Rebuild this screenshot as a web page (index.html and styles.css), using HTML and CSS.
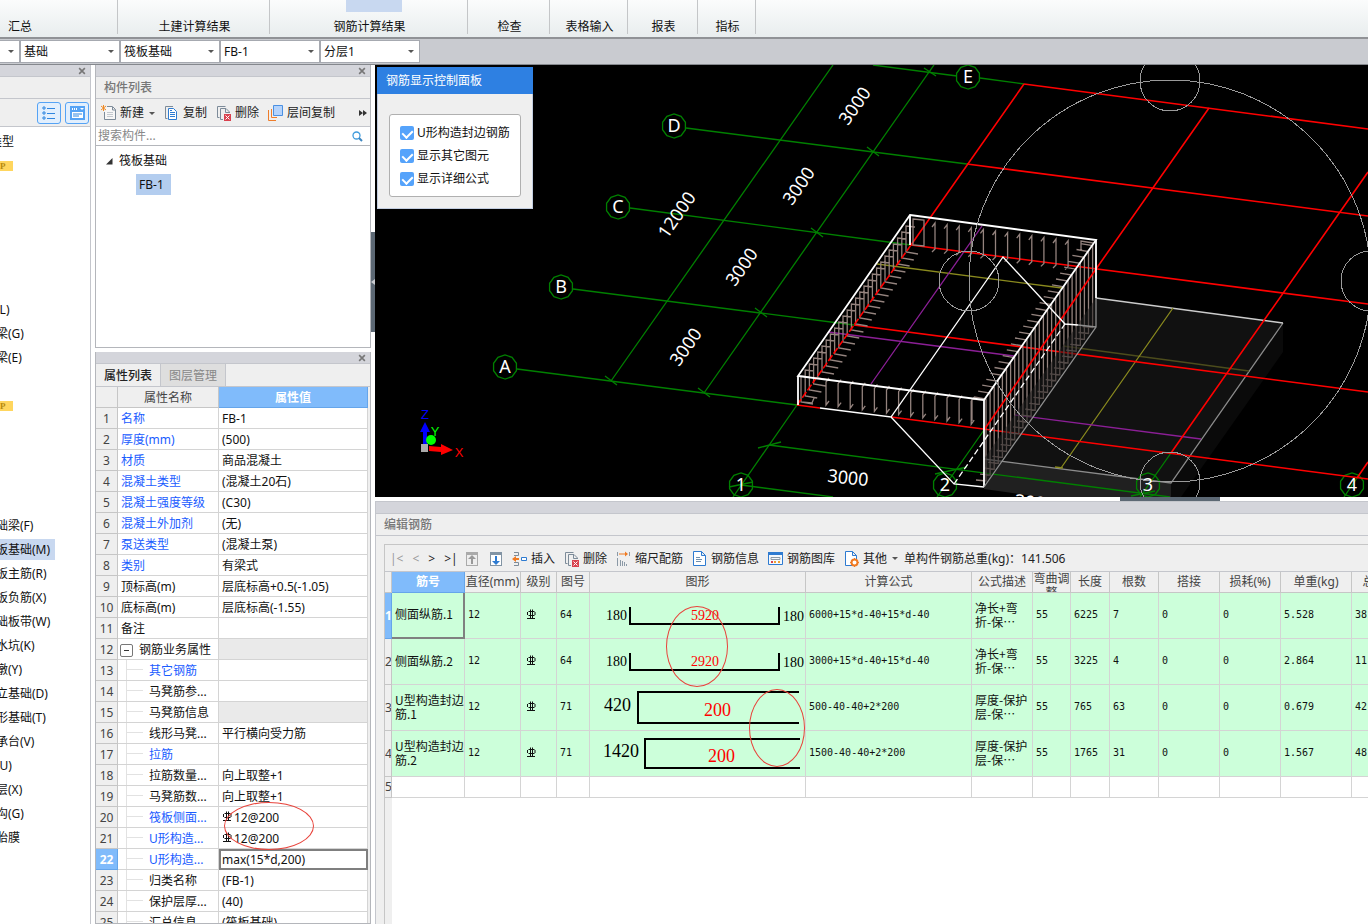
FILE: index.html
```html
<!DOCTYPE html>
<html lang="zh-CN">
<head>
  <meta charset="UTF-8" />
  <meta name="viewport" content="width=device-width, initial-scale=1.0"/>
  <title>筏板基础 - 编辑钢筋</title>
  <link rel="stylesheet" href="styles.css">
</head>
<body>
  <svg class="defs" width="0" height="0">
    <symbol id="grade" viewBox="0 0 10 11"><path d="M4.5 .5v9M6.500 .5v9M2.500 2.500h6M2.500 6.500h6M1.500 3v3M9 3v3M1 9.500h8" fill="none" stroke="currentColor"/></symbol>
    <symbol id="icon-delete" viewBox="0 0 16 16"><path d="M9.5 1.5H1.5v11h2M7 14.5H4.500V3.500H10l3.500 3.500V8M9.500 4v3.500H13" fill="none" stroke="#7d8b99"/><path d="M8 9h7v7H8z" fill="#d9414e"/><path d="M9.500 10.500l4 4M13.500 10.500l-4 4" stroke="#fff"/></symbol>
    <symbol id="icon-close" viewBox="0 0 7 7"><path d="M1 1l5 5M6 1L1 6" stroke="#777" stroke-width="1.400"/></symbol>
  </svg>

  <nav class="ribbon">
    <a class="first" href="#">汇总</a>
    <a class="w-152" href="#">土建计算结果</a>
    <a class="w-198 current" href="#">钢筋计算结果</a>
    <a class="w-82" href="#">检查</a>
    <a class="w-78" href="#">表格输入</a>
    <a class="w-70" href="#">报表</a>
    <a class="w-58" href="#">指标</a>
  </nav>

  <div class="combo-bar">
    <label class="combo combo-cut"><select aria-label="楼层"><option></option></select></label>
    <label class="combo"><select aria-label="构件大类"><option>基础</option></select></label>
    <label class="combo"><select aria-label="构件类型"><option>筏板基础</option></select></label>
    <label class="combo"><select aria-label="构件"><option>FB-1</option></select></label>
    <label class="combo"><select aria-label="分层"><option>分层1</option></select></label>
  </div>

  <div class="main">
    <aside class="nav-panel">
      <div class="strip"><button type="button" aria-label="关闭"><svg><use href="#icon-close"/></svg></button></div>
      <div class="panel-title"></div>
      <div class="view-bar">
        <button type="button" aria-label="列表"><svg width="14" height="14" viewBox="0 0 14 14"><path d="M1 1h2v2H1zM1 6h2v2H1zM1 11h2v2H1zM5 2.500h8M5 7.500h8M5 12.500h8" fill="none" stroke="#2f86e0"/></svg></button>
        <button type="button" aria-label="视图"><svg width="15" height="14" viewBox="0 0 15 14"><path d="M0 0h15v14H0z" fill="#55a3f5"/><path d="M2 6h11v6H2zM2 2h1v2H2zM4 2h1v2H4zM6 2h1v2H6zM10 2h4l-2 2z" fill="#fff"/><path d="M3 8h9M3 10h6" stroke="#2f86e0"/></svg></button>
      </div>
      <ul class="nav-list">
        <li class="group">类型</li>
        <li><span class="tag">P</span></li>
        <li></li><li></li><li></li><li></li><li></li>
        <li>(L)</li>
        <li>梁(G)</li>
        <li>梁(E)</li>
        <li></li>
        <li><span class="tag">P</span></li>
        <li></li><li></li><li></li><li></li>
        <li>础梁(F)</li>
        <li><span class="picked">板基础(M)</span></li>
        <li>板主筋(R)</li>
        <li>板负筋(X)</li>
        <li>础板带(W)</li>
        <li>水坑(K)</li>
        <li>墩(Y)</li>
        <li>立基础(D)</li>
        <li>形基础(T)</li>
        <li>承台(V)</li>
        <li>(U)</li>
        <li>层(X)</li>
        <li>沟(G)</li>
        <li>胎膜</li>
      </ul>
    </aside>

    <div class="side">
      <section class="component-panel">
        <div class="strip"><button type="button" aria-label="关闭"><svg><use href="#icon-close"/></svg></button></div>
        <h2 class="panel-title">构件列表</h2>
        <div class="toolbar">
          <button type="button"><svg viewBox="0 0 16 16"><path d="M6 1.500h5.500l3 3v10h-11V7M11.500 2v3h3" fill="#f7f7f7" stroke="#7d8b99"/><path d="M6 7.500h6M6 9.500h6M6 11.500h6" stroke="#c3c8ce"/><path d="M2.500 0v6M0 1l5 4M5 1L0 5" stroke="#f08a24"/></svg>新建<i class="caret"></i></button>
          <button type="button"><svg viewBox="0 0 16 16"><path d="M9 1.500H1.500v12h2" fill="none" stroke="#7d8b99"/><path d="M4.500 3.500h5l3 3v8h-8zM6 7.500h5M6 9.500h5M6 11.500h5M6 5.500h2" fill="#fff" stroke="#2e7bd1"/></svg>复制</button>
          <button type="button"><svg><use href="#icon-delete"/></svg>删除</button>
          <button type="button"><svg viewBox="0 0 16 16"><path d="M.500 5v10.500H8M3.500 4v8.500H9" fill="none" stroke="#ee7d2b"/><path d="M5.500.500h9v10h-9z" fill="#b5d3fb" stroke="#4a90e2"/></svg>层间复制</button>
          <button type="button" class="more" aria-label="更多"><svg width="8" height="6" viewBox="0 0 8 6"><path d="M0 0l4 3-4 3zM4 0l4 3-4 3z" fill="#333"/></svg></button>
        </div>
        <div class="search">
          <input type="text" placeholder="搜索构件..." aria-label="搜索构件">
          <svg width="11" height="11" viewBox="0 0 11 11"><circle cx="4.500" cy="4.500" r="3.500" fill="none" stroke="#3f9bdc" stroke-width="1.300"/><path d="M7 7l3 3" stroke="#3f87c0" stroke-width="2"/></svg>
        </div>
        <div class="tree">
          <div class="tree-root"><svg width="7" height="7" viewBox="0 0 7 7"><path d="M6.500 0v6.500H0z" fill="#333"/></svg>筏板基础</div>
          <span class="tree-leaf">FB-1</span>
        </div>
      </section>

      <section class="property-panel">
        <div class="strip"><button type="button" aria-label="关闭"><svg><use href="#icon-close"/></svg></button></div>
        <div class="tabs">
          <button type="button" class="active">属性列表</button>
          <button type="button">图层管理</button>
        </div>
        <table class="props">
          <colgroup><col class="c-num"><col class="c-name"><col class="c-val"></colgroup>
          <thead><tr><th></th><th>属性名称</th><th class="hot">属性值</th></tr></thead>
          <tbody>
            <tr><th>1</th><td class="link">名称</td><td>FB-1</td></tr>
            <tr><th>2</th><td class="link">厚度(mm)</td><td>(500)</td></tr>
            <tr><th>3</th><td class="link">材质</td><td>商品混凝土</td></tr>
            <tr><th>4</th><td class="link">混凝土类型</td><td>(混凝土20石)</td></tr>
            <tr><th>5</th><td class="link">混凝土强度等级</td><td>(C30)</td></tr>
            <tr><th>6</th><td class="link">混凝土外加剂</td><td>(无)</td></tr>
            <tr><th>7</th><td class="link">泵送类型</td><td>(混凝土泵)</td></tr>
            <tr><th>8</th><td class="link">类别</td><td>有梁式</td></tr>
            <tr><th>9</th><td>顶标高(m)</td><td>层底标高+0.5(-1.05)</td></tr>
            <tr><th>10</th><td>底标高(m)</td><td>层底标高(-1.55)</td></tr>
            <tr><th>11</th><td>备注</td><td></td></tr>
            <tr><th>12</th><td class="parent"><button type="button" class="fold" aria-label="折叠"></button>钢筋业务属性</td><td class="off"></td></tr>
            <tr><th>13</th><td class="sub link">其它钢筋</td><td></td></tr>
            <tr><th>14</th><td class="sub">马凳筋参...</td><td></td></tr>
            <tr><th>15</th><td class="sub">马凳筋信息</td><td class="off"></td></tr>
            <tr><th>16</th><td class="sub">线形马凳...</td><td>平行横向受力筋</td></tr>
            <tr><th>17</th><td class="sub link">拉筋</td><td></td></tr>
            <tr><th>18</th><td class="sub">拉筋数量...</td><td>向上取整+1</td></tr>
            <tr><th>19</th><td class="sub">马凳筋数...</td><td>向上取整+1</td></tr>
            <tr><th>20</th><td class="sub link">筏板侧面...</td><td><svg class="grade"><use href="#grade"/></svg>12@200</td></tr>
            <tr><th>21</th><td class="sub link">U形构造...</td><td><svg class="grade"><use href="#grade"/></svg>12@200</td></tr>
            <tr><th class="hot">22</th><td class="sub link">U形构造...</td><td class="editing">max(15*d,200)</td></tr>
            <tr><th>23</th><td class="sub">归类名称</td><td>(FB-1)</td></tr>
            <tr><th>24</th><td class="sub">保护层厚...</td><td>(40)</td></tr>
            <tr><th>25</th><td class="sub">汇总信息</td><td>(筏板基础)</td></tr>
          </tbody>
        </table>
        <div class="mark mark-props"></div>
      </section>
    </div>

    <div class="splitter-v"><div class="handle"><svg width="4" height="6" viewBox="0 0 4 6"><path d="M4 0v6L0 3z" fill="#c9cbd0"/></svg></div></div>

    <div class="work">
      <div class="scene">
        <svg class="canvas" viewBox="375 65 993 432" preserveAspectRatio="xMinYMin slice">
          <!-- slab -->
          <path d="M1096 298L1283 323 1171 483 984 459z" fill="#111"/>
          <path d="M1283 323V352L1181 497H1171V483z" fill="#0a0a0a"/>
          <path d="M984 459L1171 483V497H1040L984 489z" fill="#202020"/>
          <path d="M984 459L1171 483 1283 323" class="ln" stroke="#8c8c8c"/>
          <path d="M1096 298L1283 323" class="ln" stroke="#ccc"/>
          <path d="M1063 346L1249 371" class="ln" stroke="#4c4c1c"/>
          <path d="M1173 308L1061 468M1055 467l8 1" class="ln" stroke="#8a8a1e"/>
          <path d="M1015 415L1201 439" class="ln" stroke="#8b1f96"/>
          <!-- grid axes -->
          <g class="ln" stroke="#008000">
            <path d="M517 369L797 405M573 289L854 325M630 208L911 245M686 128L967 164M873 65L957 76M980 78L1024 84"/>
            <path d="M611 381L833 65M704 393L934 65M797 405L733 497M984 430L937 497M1171 453L1140 497M1357 478L1344 497"/>
            <path d="M769 445L1170 497M741 485L833 497"/>
            <path d="M605 376l12 9M698 388l12 9M755 308l12 9M811 228l12 9M867 147l12 9M924 68l12 8M758 448l23 -6M729 487l24 -5M935 474l32 -7M1131 496l24 -5"/>
            <g id="bubbles"></g>
          </g>
          <g class="ln red">
            <path d="M797 405L820 408M891 417L1368 479M854 325L1368 392M911 245L1368 304M967 164L1368 216M1024 84L1368 129"/>
            <path d="M911 245L1024 84M1096 269L1209 108M1171 453L1368 172M1357 478L1368 462"/>
          </g>
          <path d="M877 264L1062 288" class="ln" stroke="#8a8a1e"/>
          <path d="M828 332L1014 356M982 226L871 384" class="ln" stroke="#8b1f96"/>
          <!-- stirrups, filled in by scene.js -->
          <path id="stirrups" class="ln" stroke="#94837e"/>
          <path d="M984 459L1096 298V327L984 487z" fill="#111" opacity=".5"/>
          <path d="M984 430L1096 269" class="ln red"/>
          <path d="M797 405L911 245" class="ln red" stroke-dasharray="7 2"/>
          <!-- raft outline -->
          <g class="ln" stroke="#fff">
            <path d="M910 215L1096 240 984 400 798 376z" class="edge"/>
            <path d="M910 215V245M798 376V405M984 400V487M1096 240V298" class="edge"/>
            <path d="M820 408L891 417 1003 257 1065 324 1078 325M891 417L954 484 984 487"/>
            <path d="M954 484L1065 324" stroke-dasharray="6 3"/>
            <path d="M984 487L1096 327V298M1078 325l18 2" stroke="#8f8f8f"/>
          </g>
          <g class="orbit">
            <circle cx="1170" cy="281" r="201"/>
            <circle cx="1170" cy="81" r="30"/>
            <circle cx="969" cy="281" r="30"/>
            <circle cx="1371" cy="281" r="30"/>
            <circle cx="1170" cy="482" r="30"/>
          </g>
          <g id="labels" class="labels"></g>
          <!-- axis gizmo -->
          <path d="M421 444h7v8h-7z" fill="#aaa"/>
          <path d="M423 444v-12h-3l5-10 5 10h-3v12z" fill="#00f"/>
          <circle cx="431" cy="440" r="5" fill="#0f0"/>
          <path d="M429 446l12 1v-3l12 6-12 5v-3l-12-1z" fill="#f00"/>
          <g class="gizmo"><text x="425" y="419" fill="#00f">Z</text><text x="435" y="436" fill="#0f0">Y</text><text x="459" y="457" fill="#f00">X</text></g>
        </svg>
        <div class="dialog">
          <h3>钢筋显示控制面板</h3>
          <div class="dialog-body">
            <label><input type="checkbox" checked>U形构造封边钢筋</label>
            <label><input type="checkbox" checked>显示其它图元</label>
            <label><input type="checkbox" checked>显示详细公式</label>
          </div>
        </div>
      </div>

      <div class="splitter-h"><div class="handle"></div></div>

      <section class="rebar-panel">
        <div class="strip"></div>
        <h2 class="panel-title">编辑钢筋</h2>
        <div class="rebar-box">
          <div class="toolbar">
            <div class="pager">
              <button type="button" disabled>|&lt;</button>
              <button type="button" disabled>&lt;</button>
              <button type="button">&gt;</button>
              <button type="button">&gt;|</button>
            </div>
            <button type="button" class="move" aria-label="上移"><svg viewBox="0 0 16 16"><path d="M2 1h12v14H2z" fill="#aaa"/><path d="M3 4h10v10H3z" fill="#eee"/><path d="M8 4l4 4H9v5H7V8H4z" fill="#999"/></svg></button>
            <button type="button" class="move" aria-label="下移"><svg viewBox="0 0 16 16"><path d="M2 1h12v14H2z" fill="#8294a4"/><path d="M3 4h10v10H3z" fill="#fff"/><path d="M8 14l4-4H9V5H7v5H4z" fill="#2e7bd1"/></svg></button>
            <button type="button"><svg viewBox="0 0 16 16"><path d="M2 1.500h4.500v3H2M2 11.500h4.500v3H2" fill="none" stroke="#7d8b99"/><path d="M0 8l4-3v2h3v2H4v2z" fill="#f07a22"/><path d="M9.500 6.500h5v3h-5z" fill="#fff" stroke="#2e7bd1"/></svg>插入</button>
            <button type="button"><svg><use href="#icon-delete"/></svg>删除</button>
            <button type="button"><svg viewBox="0 0 16 16"><path d="M1.500 7v8M4.500 9v6M6.500 10v5M8.500 11v4M10.500 13v2" stroke="#8b99a6"/><path d="M1.500 1v4M13.500 1v4" stroke="#8b99a6"/><path d="M3 2.500h6v-2l3 2.500-3 2.500v-2H3z" fill="#f07a22"/></svg>缩尺配筋</button>
            <button type="button"><svg viewBox="0 0 16 16"><path d="M1.500.500h8l4 4v10h-12zM9.500.500v4h4" fill="#fff" stroke="#2e7bd1"/><path d="M4 6.500h4M4 8.500h6M4 10.500h5" stroke="#6f8fae"/></svg>钢筋信息</button>
            <button type="button"><svg viewBox="0 0 16 16"><path d="M.500 1.500h14v12H.500z" fill="#f4f8fc" stroke="#2e7bd1"/><path d="M0 1h15v3H0z" fill="#2e7bd1"/><path d="M3 6.500h9v2H3z" fill="none" stroke="#8b99a6"/><path d="M3 11h2" stroke="#d9414e" stroke-width="2"/><path d="M6 11h2M10 11h2" stroke="#f0a030" stroke-width="2"/></svg>钢筋图库</button>
            <button type="button"><svg viewBox="0 0 16 16"><path d="M1.500.500h7l4 4v10h-11zM8.500.500v4h4" fill="#fff" stroke="#2e7bd1"/><circle cx="10.500" cy="11.500" r="3" fill="#fff" stroke="#f07a22" stroke-width="2"/><path d="M10.500 7v9M6 11.500h2M13 11.500h2" stroke="#f07a22" stroke-dasharray="2 5"/></svg>其他<i class="caret"></i></button>
            <span class="total">单构件钢筋总重(kg)：141.506</span>
          </div>
          <div class="grid">
            <table class="rebars">
              <colgroup>
                <col class="r-num"><col class="r-name"><col class="r-dia"><col class="r-grade"><col class="r-fig"><col class="r-shape"><col class="r-formula">
                <col class="r-desc"><col class="r-bend"><col class="r-len"><col class="r-count"><col class="r-lap"><col class="r-lap"><col class="r-unit"><col class="r-total">
              </colgroup>
              <thead>
                <tr><th></th><th class="hot">筋号</th><th>直径(mm)</th><th>级别</th><th>图号</th><th>图形</th><th>计算公式</th><th>公式描述</th><th><div class="clip">弯曲调整</div></th><th>长度</th><th>根数</th><th>搭接</th><th>损耗(%)</th><th>单重(kg)</th><th>总重(kg)</th></tr>
              </thead>
              <tbody>
                <tr>
                  <th class="hot">1</th><td class="name cursor">侧面纵筋.1</td><td>12</td><td class="mid"><svg class="grade"><use href="#grade"/></svg></td><td>64</td>
                  <td class="shape"><svg width="215" height="45" viewBox="0 0 215 45"><path d="M40 14V31H189V14"/><text x="16" y="27">180</text><text class="len" x="101" y="27">5920</text><text x="193" y="28">180</text></svg></td>
                  <td>6000+15*d-40+15*d-40</td><td class="desc">净长+弯<br>折-保…</td><td>55</td><td>6225</td><td>7</td><td>0</td><td>0</td><td>5.528</td><td>38.696</td>
                </tr>
                <tr>
                  <th>2</th><td class="name">侧面纵筋.2</td><td>12</td><td class="mid"><svg class="grade"><use href="#grade"/></svg></td><td>64</td>
                  <td class="shape"><svg width="215" height="45" viewBox="0 0 215 45"><path d="M40 14V31H189V14"/><text x="16" y="27">180</text><text class="len" x="101" y="27">2920</text><text x="193" y="28">180</text></svg></td>
                  <td>3000+15*d-40+15*d-40</td><td class="desc">净长+弯<br>折-保…</td><td>55</td><td>3225</td><td>4</td><td>0</td><td>0</td><td>2.864</td><td>11.456</td>
                </tr>
                <tr>
                  <th>3</th><td class="name">U型构造封边<br>筋.1</td><td>12</td><td class="mid"><svg class="grade"><use href="#grade"/></svg></td><td>71</td>
                  <td class="shape big"><svg width="215" height="45" viewBox="0 0 215 45"><path d="M209 7H48V38H209"/><text x="14" y="26">420</text><text class="len" x="114" y="31">200</text></svg></td>
                  <td>500-40-40+2*200</td><td class="desc">厚度-保护<br>层-保…</td><td>55</td><td>765</td><td>63</td><td>0</td><td>0</td><td>0.679</td><td>42.777</td>
                </tr>
                <tr>
                  <th>4</th><td class="name">U型构造封边<br>筋.2</td><td>12</td><td class="mid"><svg class="grade"><use href="#grade"/></svg></td><td>71</td>
                  <td class="shape big"><svg width="215" height="45" viewBox="0 0 215 45"><path d="M210 8H55V37H210"/><text x="13" y="26">1420</text><text class="len" x="118" y="31">200</text></svg></td>
                  <td>1500-40-40+2*200</td><td class="desc">厚度-保护<br>层-保…</td><td>55</td><td>1765</td><td>31</td><td>0</td><td>0</td><td>1.567</td><td>48.577</td>
                </tr>
                <tr class="blank"><th>5</th><td></td><td></td><td></td><td></td><td></td><td></td><td></td><td></td><td></td><td></td><td></td><td></td><td></td><td></td></tr>
              </tbody>
            </table>
            <div class="mark mark-length"></div>
            <div class="mark mark-hook"></div>
          </div>
        </div>
      </section>
    </div>
  </div>
  <script src="scene.js"></script>
</body>
</html>
```
FILE: styles.css
```css
* {
  margin: 0;
  padding: 0;
  box-sizing: border-box;
}
body {
  display: flex;
  flex-direction: column;
  height: 100vh;
  overflow: hidden;
  font-family: "Noto Sans", "Noto Sans CJK SC", sans-serif;
  font-size: 12px;
  line-height: 16px;
  color: #111;
  background: #fff;
}
button, input, select {
  font: inherit;
  color: inherit;
  border: none;
  background: none;
}
svg {
  display: block;
  flex: none;
}
.defs {
  position: absolute;
}

/* ribbon */
.ribbon {
  display: flex;
  flex: none;
  height: 39px;
  padding-bottom: 3px;
  background: linear-gradient(#fbfcfc, #e8edee);
  border-bottom: 2px solid #909296;
}
.ribbon a {
  display: flex;
  align-items: flex-end;
  justify-content: center;
  padding-left: 2px;
  line-height: 14px;
  color: #111;
  text-decoration: none;
  border-right: 1px solid #c4c6c8;
}
.ribbon .first {
  width: 118px;
  padding-left: 8px;
  justify-content: flex-start;
}
.ribbon .current {
  background: linear-gradient(#c8d8f0, #c8d8f0) 76px 0 / 56px 12px no-repeat;
}
.w-152 { width: 152px; }
.w-198 { width: 198px; }
.w-82 { width: 82px; }
.w-78 { width: 78px; }
.w-70 { width: 70px; }
.w-58 { width: 58px; }

/* combo row */
.combo-bar {
  display: flex;
  flex: none;
  height: 26px;
  padding-top: 1px;
  background: #c9cbd0;
  border-bottom: 1px solid #85888d;
}
.combo {
  position: relative;
  width: 100px;
  height: 23px;
  background: #fff;
  border: 1px solid #a6a9b0;
}
.combo-cut {
  width: 20px;
  border-left: none;
}
.combo select {
  width: 100%;
  height: 21px;
  padding-left: 3px;
  appearance: none;
}
.combo::after,
.caret {
  content: "";
  border: 3px solid transparent;
  border-top-color: #555;
  border-bottom: none;
}
.combo::after {
  position: absolute;
  right: 5px;
  top: 9px;
}
.caret {
  margin-left: 2px;
}

.main {
  display: flex;
  flex: 1;
  min-height: 0;
}
.strip {
  display: flex;
  flex: none;
  justify-content: flex-end;
  align-items: center;
  height: 12px;
  padding-right: 4px;
  background: #d4d5db;
  border-bottom: 1px solid #c4c6cc;
}
.strip svg {
  width: 8px;
  height: 8px;
}
.panel-title {
  flex: none;
  height: 22px;
  padding-left: 8px;
  line-height: 22px;
  font-size: 12px;
  font-weight: 500;
  color: #777;
  background: #efefef;
  border-bottom: 1px solid #c4c6cc;
}

/* left navigation */
.nav-panel {
  flex: none;
  width: 91px;
  margin-right: 4px;
  overflow: hidden;
  border-right: 1px solid #c4c6cc;
}
.view-bar {
  display: flex;
  justify-content: flex-end;
  gap: 4px;
  height: 28px;
  padding: 3px 1px;
  background: #efefef;
  border-bottom: 1px solid #c4c6cc;
}
.view-bar button {
  display: flex;
  align-items: center;
  justify-content: center;
  width: 24px;
  height: 22px;
  background: #e2effd;
  border: 1px solid #55a3f5;
  border-radius: 3px;
}
.nav-list {
  padding-top: 3px;
  margin-left: -4px;
  list-style: none;
}
.nav-list li {
  height: 24px;
  line-height: 24px;
  white-space: nowrap;
}
.nav-list .group {
  margin-left: -6px;
}
.nav-list .tag {
  display: block;
  width: 17px;
  height: 17px;
  padding: 7px 0 0 4px;
  line-height: 10px;
  font-family: "Liberation Serif", serif;
  font-size: 9px;
  font-weight: bold;
  color: #b58a10;
  background: linear-gradient(#ffd65e, #ffd65e) 0 100% / 100% 10px no-repeat;
}
.nav-list .picked {
  display: inline-block;
  height: 21px;
  padding-right: 5px;
  line-height: 21px;
  background: #c8d8f0;
}

/* component list and properties */
.side {
  display: flex;
  flex: none;
  flex-direction: column;
  gap: 4px;
  width: 276px;
}
.component-panel,
.property-panel {
  border: 1px solid #b4b6bb;
  border-top: none;
}
.component-panel {
  flex: none;
  height: 283px;
}
.toolbar {
  display: flex;
  align-items: center;
  gap: 9px;
  height: 28px;
  padding: 1px 0 0 5px;
  background: #efefef;
  border-bottom: 1px solid #c4c6cc;
}
.toolbar button {
  display: flex;
  flex: none;
  align-items: center;
  gap: 3px;
  color: #222;
}
.toolbar button > svg {
  width: 16px;
  height: 16px;
}
.toolbar .more {
  margin-left: auto;
  padding-right: 3px;
}
.toolbar .more svg {
  width: 8px;
  height: 6px;
}
.search {
  display: flex;
  align-items: center;
  height: 19px;
  padding: 0 7px 0 2px;
  border-bottom: 1px solid #b4b6bb;
}
.search input {
  flex: 1;
  min-width: 0;
  outline: none;
}
.search input::placeholder {
  color: #888;
}
.tree {
  padding: 3px 0 0 10px;
}
.tree-root {
  display: flex;
  align-items: center;
  gap: 6px;
  height: 24px;
}
.tree-leaf {
  display: inline-block;
  height: 21px;
  margin: 1px 0 0 30px;
  padding: 0 7px 0 3px;
  line-height: 21px;
  background: #b3cdef;
}
.property-panel {
  position: relative;
  flex: 1;
  min-height: 0;
  overflow: hidden;
  background: #efefef;
}
.tabs {
  display: flex;
  height: 23px;
  border-bottom: 1px solid #c4c6cc;
}
.tabs button {
  width: 65px;
  padding-top: 2px;
  color: #888;
  background: #dedede;
  border-right: 1px solid #c4c6cc;
}
.tabs .active {
  font-weight: 500;
  color: #222;
  background: #efefef;
}
table {
  table-layout: fixed;
  border-spacing: 0;
}
th, td {
  overflow: hidden;
  white-space: nowrap;
  border-right: 1px solid #d4d4d4;
  border-bottom: 1px solid #d4d4d4;
}
th {
  font-weight: 400;
  color: #444;
  background: #efefef;
  border-color: #c6c6c6;
}
.props {
  width: 272px;
}
.props th {
  padding-top: 2px;
}
.props td {
  padding: 2px 0 0 3px;
  background: #fff;
}
.props tr {
  height: 21px;
}
.c-num { width: 22px; }
.c-name { width: 101px; }
.c-val { width: 149px; }
th.hot {
  font-weight: 700;
  color: #fff;
  background: #80bbfb;
  border-color: #65a5ea;
}
.props .link {
  color: #1a5cff;
}
.props .off {
  background: #eaeaea;
}
.props .parent {
  padding-left: 2px;
}
.fold {
  width: 13px;
  height: 13px;
  margin-right: 6px;
  vertical-align: -2px;
  background: linear-gradient(#333, #333) center / 5px 1px no-repeat;
  border: 1px solid #777;
  border-radius: 2px;
}
.props .sub {
  padding-left: 31px;
  background:
    linear-gradient(#e2e2e2, #e2e2e2) 8px 0 / 1px 100% no-repeat,
    linear-gradient(#e2e2e2, #e2e2e2) 8px 9px / 17px 1px no-repeat,
    #fff;
}
.props .editing {
  outline: 2px solid #7f7f7f;
  outline-offset: -2px;
}
.grade {
  display: inline-block;
  width: 10px;
  height: 11px;
  margin-right: 2px;
}
.mark {
  position: absolute;
  border: 1px solid #e8443c;
  border-radius: 50%;
}
.mark-props {
  left: 128px;
  top: 450px;
  width: 90px;
  height: 48px;
}

/* splitters */
.splitter-v {
  flex: none;
  width: 4px;
  padding-top: 167px;
}
.splitter-v .handle {
  display: flex;
  align-items: center;
  height: 100px;
  background: #5c6874;
}
.splitter-h {
  flex: none;
  height: 4px;
}
.splitter-h .handle {
  width: 100px;
  height: 4px;
  margin-left: 75%;
  background: #5c6874;
}

/* 3d view */
.work {
  display: flex;
  flex: 1;
  flex-direction: column;
  min-width: 0;
}
.scene {
  position: relative;
  flex: none;
  height: 432px;
  overflow: hidden;
  background: #000;
}
.canvas {
  width: 100%;
  height: 100%;
}
.ln {
  fill: none;
  stroke-width: 1.3;
}
.red {
  stroke: #f00;
  stroke-width: 1.6;
}
.edge {
  stroke-width: 1.8;
}
.orbit {
  fill: none;
  stroke: #9a9a9a;
  stroke-width: 1;
  shape-rendering: crispEdges;
}
.labels text {
  font-size: 18px;
  fill: #fff;
  text-anchor: middle;
}
.gizmo {
  font-family: "Liberation Sans", sans-serif;
  font-size: 13px;
  text-anchor: middle;
}
.dialog {
  position: absolute;
  left: 2px;
  top: 2px;
  width: 156px;
  padding-bottom: 11px;
  background: #efefef;
  border: 1px solid #c2cde0;
  border-top: none;
}
.dialog h3 {
  height: 27px;
  margin: 0 -1px;
  padding-left: 9px;
  line-height: 27px;
  font-size: 12px;
  font-weight: 400;
  color: #fff;
  background: #2e80e2;
}
.dialog-body {
  margin: 20px 11px 0;
  padding: 6px 0 6px 10px;
  background: #fff;
  border: 1px solid #b0b0b0;
  border-radius: 3px;
}
.dialog-body label {
  display: flex;
  align-items: center;
  gap: 3px;
  height: 23px;
  white-space: nowrap;
}
.dialog-body input {
  display: flex;
  flex: none;
  justify-content: center;
  width: 14px;
  height: 14px;
  padding-top: 2px;
  appearance: none;
  background: #55a3fb;
  border-radius: 2px;
}
.dialog-body input:checked::after {
  content: "";
  width: 5px;
  height: 8px;
  border: solid #fff;
  border-width: 0 2px 2px 0;
  transform: rotate(45deg);
}

/* rebar editor */
.rebar-panel {
  display: flex;
  flex: 1;
  flex-direction: column;
  min-height: 0;
  background: #efefef;
  border-top: 1px solid #c4c6cc;
  border-left: 1px solid #c4c6cc;
}
.rebar-box {
  display: flex;
  flex: 1;
  flex-direction: column;
  min-height: 0;
  margin: 8px 0 0 8px;
  border-top: 1px solid #c6c6c6;
  border-left: 1px solid #c6c6c6;
}
.rebar-box .toolbar {
  height: 27px;
}
.pager {
  display: flex;
  gap: 9px;
  width: 65px;
}
.pager button:disabled {
  color: #999;
}
.toolbar .move {
  margin-right: -1px;
}
.total {
  margin-left: -3px;
  white-space: nowrap;
  color: #222;
}
.grid {
  position: relative;
  flex: 1;
  min-height: 0;
  overflow: hidden;
  background: linear-gradient(#efefef, #efefef) 0 0 / 7px 100% no-repeat, #fff;
}
.rebars {
  width: 1034px;
}
.rebars thead tr {
  height: 21px;
}
.rebars tbody tr {
  height: 46px;
}
.rebars tbody .blank {
  height: 21px;
}
.rebars td {
  padding: 0 0 2px 3px;
  font-family: "DejaVu Sans Mono", monospace;
  font-size: 10px;
  background: #ccffda;
}
.rebars .blank td {
  background: #fff;
}
.rebars .name,
.rebars .desc {
  line-height: 14px;
  font-family: "Noto Sans CJK SC", sans-serif;
  font-size: 12px;
}
.rebars .mid {
  padding-left: 5px;
}
.rebars .mid .grade {
  vertical-align: -2px;
}
.rebars .cursor {
  border-right: 2px solid #808080;
  border-bottom: 2px solid #808080;
}
.rebars .shape {
  padding: 0;
}
.shape path {
  fill: none;
  stroke: #000;
  stroke-width: 2;
}
.shape text {
  font-family: "Liberation Serif", serif;
  font-size: 14px;
}
.shape.big text {
  font-size: 18px;
}
.shape .len {
  fill: #f00;
}
.clip {
  height: 20px;
  line-height: 14px;
  white-space: normal;
  overflow: hidden;
}
.r-num { width: 7px; }
.r-name { width: 73px; }
.r-dia { width: 56px; }
.r-grade { width: 36px; }
.r-fig { width: 33px; }
.r-shape { width: 216px; }
.r-formula { width: 166px; }
.r-desc { width: 61px; }
.r-bend { width: 38px; }
.r-len { width: 39px; }
.r-count { width: 49px; }
.r-lap { width: 61px; }
.r-unit { width: 71px; }
.r-total { width: 67px; }
.mark-length {
  left: 281px;
  top: 34px;
  width: 62px;
  height: 81px;
}
.mark-hook {
  left: 364px;
  top: 117px;
  width: 56px;
  height: 78px;
}
```
FILE: scene.js
```js
const SVG = 'http://www.w3.org/2000/svg';

const axes = [
  ['A', 505, 367], ['B', 561, 287], ['C', 618, 207], ['D', 674, 126], ['E', 968, 77],
  ['1', 741, 485], ['2', 945, 485], ['3', 1148, 485], ['4', 1352, 485]
];
const dims = [
  ['3000', 855, 106, -55], ['3000', 799, 186, -55], ['3000', 742, 267, -55],
  ['3000', 686, 347, -55], ['12000', 677, 215, -55],
  ['3000', 848, 478, 6], ['3000', 1035, 503, 6]
];

function addText(str, x, y, angle) {
  const t = document.createElementNS(SVG, 'text');
  t.setAttribute('transform', `translate(${x} ${y}) rotate(${angle})`);
  t.setAttribute('y', 6);
  t.textContent = str;
  document.getElementById('labels').appendChild(t);
}

axes.forEach(([name, x, y]) => {
  const points = [];
  for (let i = 0; i < 10; i++) {
    const a = Math.PI * (i / 5 + 0.5);
    points.push(`${x + 12 * Math.cos(a)},${y + 12 * Math.sin(a)}`);
  }
  const ring = document.createElementNS(SVG, 'polygon');
  ring.setAttribute('points', points.join(' '));
  document.getElementById('bubbles').appendChild(ring);
  addText(name, x, y, 0);
});
dims.forEach(d => addText(...d));

let d = '';
// back wall
for (let i = 0; i < 12; i++) {
  d += `M${932 + i * 12.1} ${252 + i * 1.6}l3 -3v-26l-3 4`;
}
// front wall
for (let i = 0; i < 13; i++) {
  d += `M${829 + i * 12.1} ${378 + i * 1.6}l-3 4v23l3 -4`;
}
// left wall
for (let i = 0; i < 26; i++) {
  const x = 801 + i * 4.2;
  const y = 402 - i * 6;
  d += `M${x + 9} ${y - 25}l-9 -1v26l12 2`;
}
// right wall
for (let i = 0; i < 27; i++) {
  const x = 986 + i * 4.1;
  const y = 399 - i * 5.9;
  d += `M${x - 12} ${y - 2}l12 2v82l-10 -1`;
}
// corner stirrups
d += 'M913 219l11 1v26l-11 -1zM1093 243l-12 -2v10M984 400l-12 -1v22M801 382v20l11 1 2 -5';
document.getElementById('stirrups').setAttribute('d', d);
```
